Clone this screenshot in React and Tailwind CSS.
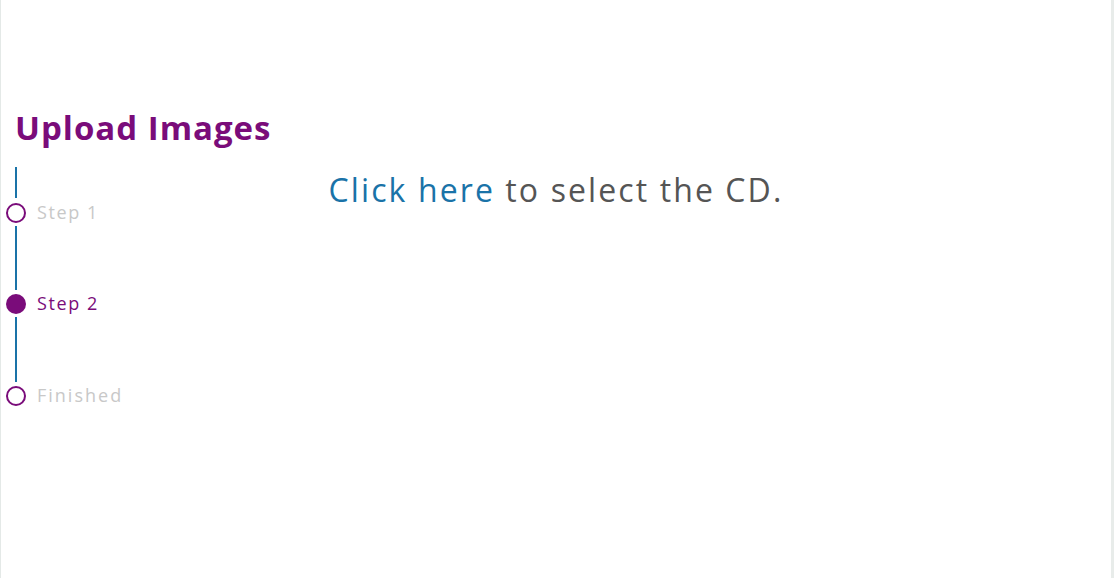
export default function App() {
  const font = { fontFamily: '"Open Sans", "Noto Sans", sans-serif' };
  return (
    <div className="h-[578px] w-full bg-white border-l border-l-[#e4e9e7] border-r-[3px] border-r-[#e8ecea]" style={font}>
      <div className="pt-[108px] pl-[14px]">
        <h1 className="text-[33px] leading-[40px] font-bold tracking-[1px] text-[#7a0c7a]">Upload Images</h1>
      </div>
      <div className="grid mt-[19px]">
        <div className="col-start-1 row-start-1 justify-self-center pt-[3px]">
          <p className="text-[32px] leading-[40px] tracking-[2.1px] text-[#555555]">
            <span className="text-[#1a73a8]">Click here</span> to select the CD.
          </p>
        </div>
        <div className="col-start-1 row-start-1 justify-self-start pl-[5px] flex flex-col">
          <div className="ml-[9px] w-[2px] h-[31px] bg-[#1a73a8]" />
          <div className="mt-[5px] flex items-start gap-[11px]">
            <div className="w-[20px] h-[20px] rounded-full border-2 border-[#7a0c7a]" />
            <span className="-mt-[1px] text-[18px] leading-[20px] tracking-[1.6px] text-[#c8c8c8]">Step 1</span>
          </div>
          <div className="ml-[9px] mt-[3px] w-[2px] h-[64px] bg-[#1a73a8]" />
          <div className="mt-[4px] flex items-start gap-[11px]">
            <div className="w-[20px] h-[20px] rounded-full bg-[#7a0c7a]" />
            <span className="-mt-[1px] text-[18px] leading-[20px] tracking-[1.6px] text-[#7a0c7a]">Step 2</span>
          </div>
          <div className="ml-[9px] mt-[3px] w-[2px] h-[65px] bg-[#1a73a8]" />
          <div className="mt-[4px] flex items-start gap-[11px]">
            <div className="w-[20px] h-[20px] rounded-full border-2 border-[#7a0c7a]" />
            <span className="-mt-[1px] text-[18px] leading-[20px] tracking-[2px] text-[#c8c8c8]">Finished</span>
          </div>
        </div>
      </div>
    </div>
  );
}
